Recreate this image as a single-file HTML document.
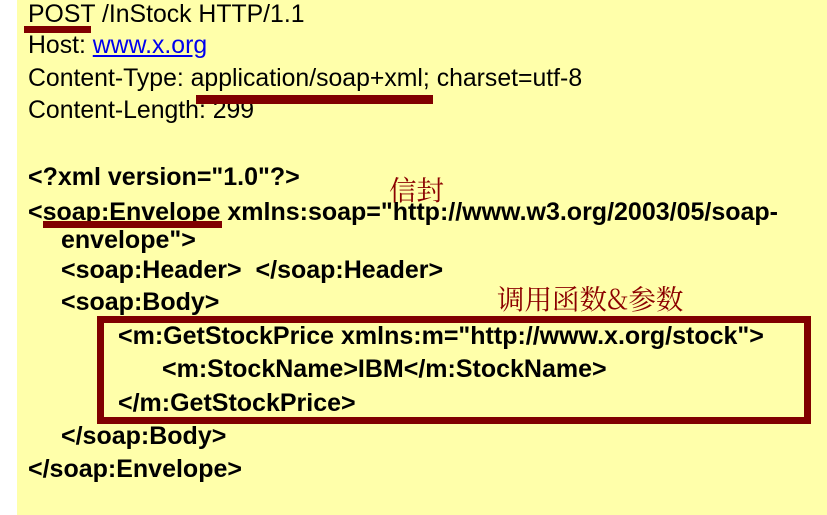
<!DOCTYPE html>
<html><head><meta charset="utf-8"><style>
body{margin:0;width:827px;height:515px;background:#fff;overflow:hidden;position:relative;font-family:"Liberation Sans",Arial,sans-serif;}
#bg{position:absolute;left:17px;top:0;width:810px;height:515px;background:#FFFFAA;}
.l{position:absolute;left:28px;font-size:24.8px;line-height:28px;color:#000;white-space:pre;}
.b{font-weight:bold;font-size:25px;}
.u{position:absolute;background:#800000;}
.cn{position:absolute;font-family:"Noto Serif CJK SC","Liberation Serif",serif;color:#8B0000;font-size:27.5px;line-height:32px;white-space:pre;}
a{color:#00e;text-decoration:underline;}
</style></head><body>
<div id="bg"></div>
<div class="l" style="top:1px">POST /InStock HTTP/1.1</div>
<div class="l" style="top:32px">Host: <a>www.x.org</a></div>
<div class="l" style="top:65px">Content-Type: application/soap+xml; charset=utf-8</div>
<div class="l" style="top:97px">Content-Length: 299</div>
<div class="l b" style="top:163px">&lt;?xml version="1.0"?&gt;</div>
<div class="l b" style="top:198px">&lt;soap:Envelope xmlns:soap="http://www.w3.org/2003/05/soap-</div>
<div class="l b" style="top:226px;left:61px">envelope"&gt;</div>
<div class="l b" style="top:256px;left:61px">&lt;soap:Header&gt;  &lt;/soap:Header&gt;</div>
<div class="l b" style="top:288px;left:61px">&lt;soap:Body&gt;</div>
<div class="l b" style="top:322px;left:118px">&lt;m:GetStockPrice xmlns:m="http://www.x.org/stock"&gt;</div>
<div class="l b" style="top:355px;left:162px">&lt;m:StockName&gt;IBM&lt;/m:StockName&gt;</div>
<div class="l b" style="top:389px;left:118px">&lt;/m:GetStockPrice&gt;</div>
<div class="l b" style="top:422px;left:61px">&lt;/soap:Body&gt;</div>
<div class="l b" style="top:455px">&lt;/soap:Envelope&gt;</div>
<div class="u" style="left:24px;top:26px;width:67px;height:7px"></div>
<div class="u" style="left:196px;top:95px;width:237px;height:9px"></div>
<div class="u" style="left:43px;top:221px;width:179px;height:7px"></div>
<div style="position:absolute;left:97px;top:316px;width:700px;height:94px;border:7px solid #800000;"></div>
<div class="cn" style="left:389px;top:172px">信封</div>
<div class="cn" style="left:497px;top:281px">调用函数&amp;参数</div>
</body></html>
